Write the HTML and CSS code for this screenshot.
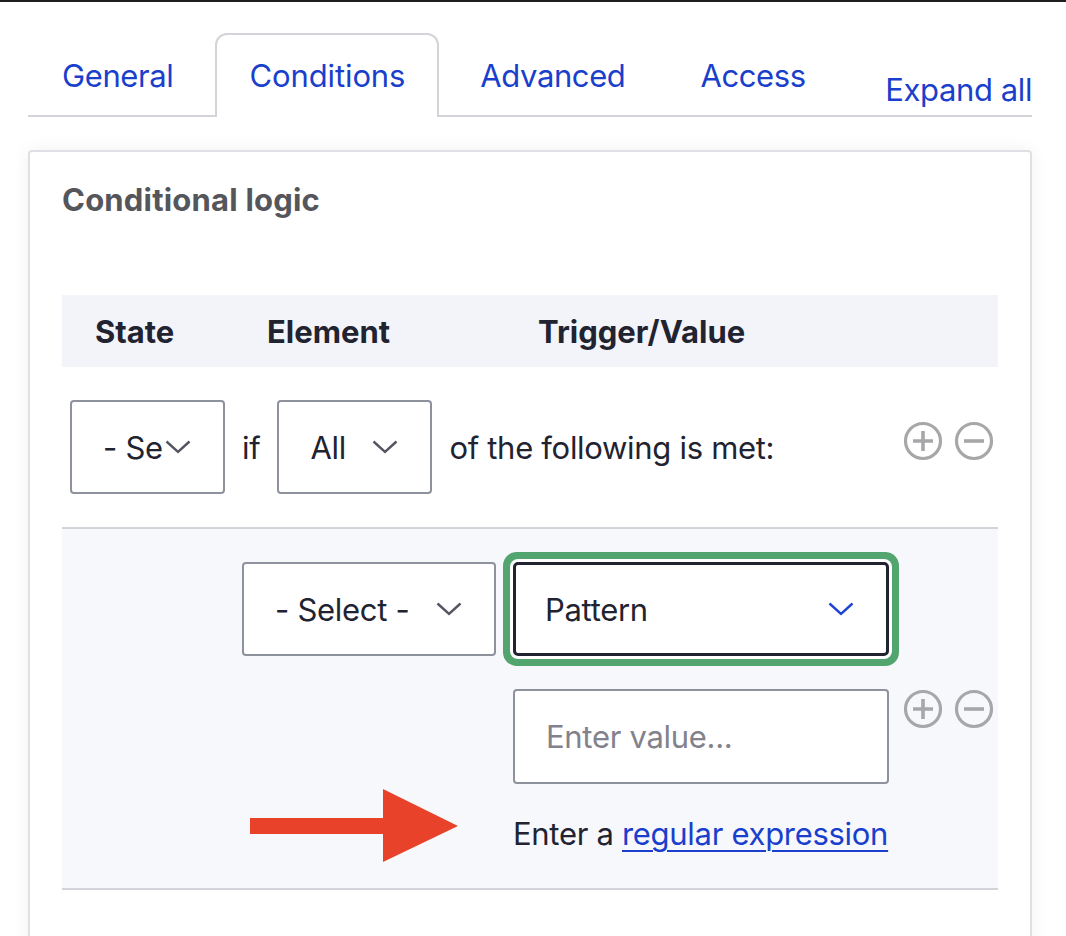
FILE: index.html
```html
<!DOCTYPE html>
<html lang="en">
<head>
<meta charset="utf-8">
<title>Conditions</title>
<link rel="stylesheet" href="styles.css">
</head>
<body>
<div class="page">
  <nav class="tabs">
    <a class="tab" href="#">General</a>
    <a class="tab active" href="#">Conditions</a>
    <a class="tab" href="#">Advanced</a>
    <a class="tab" href="#">Access</a>
    <a class="expand" href="#">Expand all</a>
  </nav>

  <section class="panel">
    <h2 class="panel-title">Conditional logic</h2>

    <div class="states">
      <div class="states-head">
        <div class="th">State</div>
        <div class="th">Element</div>
        <div class="th th-wide">Trigger/Value</div>
      </div>

      <div class="state-row">
        <div class="state-cell">
          <div class="select select-narrow">
            <span class="select-text">- Se</span>
            <svg class="chev" viewBox="0 0 26 14" width="26" height="14"><path d="M1.5 1.5 L13 12 L24.5 1.5" /></svg>
          </div>
          <span class="word">if</span>
          <div class="select select-narrow">
            <span class="select-text">All</span>
            <svg class="chev" viewBox="0 0 26 14" width="26" height="14"><path d="M1.5 1.5 L13 12 L24.5 1.5" /></svg>
          </div>
          <span class="word">of the following is met:</span>
        </div>
        <div class="ops ops-state">
          <svg class="op" viewBox="0 0 40 40" width="40" height="40"><circle cx="20" cy="20" r="17.5"/><path d="M20 10 V30 M10 20 H30"/></svg>
          <svg class="op" viewBox="0 0 40 40" width="40" height="40"><circle cx="20" cy="20" r="17.5"/><path d="M10 20 H30"/></svg>
        </div>
      </div>

      <div class="cond-row">
        <div class="cell-empty"></div>
        <div class="cell">
          <div class="select select-element">
            <span class="select-text">- Select -</span>
            <svg class="chev" viewBox="0 0 26 14" width="26" height="14"><path d="M1.5 1.5 L13 12 L24.5 1.5" /></svg>
          </div>
        </div>
        <div class="cell trigger">
          <div class="select select-focus">
            <span class="select-text">Pattern</span>
            <svg class="chev chev-blue" viewBox="0 0 26 14" width="26" height="14"><path d="M1.5 1.5 L13 12 L24.5 1.5" /></svg>
          </div>
          <input class="value" type="text" placeholder="Enter value...">
          <div class="desc">Enter a <a href="#">regular expression</a></div>
        </div>
        <div class="ops">
          <svg class="op" viewBox="0 0 40 40" width="40" height="40"><circle cx="20" cy="20" r="17.5"/><path d="M20 10 V30 M10 20 H30"/></svg>
          <svg class="op" viewBox="0 0 40 40" width="40" height="40"><circle cx="20" cy="20" r="17.5"/><path d="M10 20 H30"/></svg>
        </div>
        <svg class="arrow" viewBox="0 0 208 74" width="208" height="74"><path d="M0 29 H133 V0 L208 37 L133 73 V45 H0 Z"/></svg>
      </div>
    </div>
  </section>
</div>
</body>
</html>
```

FILE: styles.css
```css
html, body {
  margin: 0;
  padding: 0;
  background: #ffffff;
}

body {
  border-top: 2px solid #1f1f22;
  font-family: Inter, "Noto Sans", "Liberation Sans", sans-serif;
  font-size: 31px;
  line-height: 47px;
  letter-spacing: -0.3px;
  color: #222330;
  overflow: hidden;
  height: 934px;
}

.page {
  width: 1004px;
  margin-left: 28px;
  padding-top: 31px;
}

/* Tabs */
.tabs {
  display: flex;
  align-items: flex-end;
  border-bottom: 2px solid #d3d4d9;
}

.tab {
  display: block;
  padding: 17px 32px 16px;
  margin-right: 7px;
  border: 2px solid transparent;
  border-bottom: 0;
  border-radius: 12px 12px 0 0;
  color: #1a3fcc;
  text-decoration: none;
  white-space: nowrap;
  letter-spacing: -0.4px;
}

.tab:first-child {
  margin-right: 8px;
}

.tab.active {
  border-color: #d3d4d9;
  background: #ffffff;
  margin-bottom: -2px;
  padding-bottom: 18px;
  letter-spacing: -0.1px;
}

.expand {
  margin-left: auto;
  color: #1a3fcc;
  text-decoration: none;
  white-space: nowrap;
  margin-bottom: 2px;
  letter-spacing: -0.4px;
}

/* Panel */
.panel {
  margin-top: 33px;
  border: 2px solid #dfe0e5;
  border-radius: 4px;
  padding: 24px 32px 80px;
  box-shadow: 0 0 18px rgba(0, 0, 0, 0.06);
}

.panel-title {
  margin: 0 0 72px;
  font-size: 31px;
  line-height: 47px;
  font-weight: 700;
  letter-spacing: 0.2px;
  color: #55565b;
}

/* States table */
.states {
  position: relative;
}

.states-head,
.state-row,
.cond-row {
  display: grid;
  grid-template-columns: 172px 271px 390px 1fr;
}

.states-head {
  background: #f3f4f9;
  height: 72px;
  align-items: center;
}

.th {
  padding-left: 33px;
  font-weight: 700;
  letter-spacing: 0;
  white-space: nowrap;
}

.th-wide {
  grid-column: span 2;
}

.state-row {
  border-bottom: 2px solid #d3d4d9;
}

.state-cell {
  grid-column: span 3;
  display: flex;
  align-items: center;
  gap: 17px;
  padding: 33px 8px;
}

.word {
  white-space: nowrap;
}

/* Select look-alikes */
.select {
  box-sizing: border-box;
  height: 94px;
  display: flex;
  align-items: center;
  padding: 0 32px 0 31px;
  border: 2px solid #8e929c;
  border-radius: 4px;
  background: #ffffff;
}

.select-text {
  flex: 1;
  white-space: nowrap;
}

.select-narrow {
  width: 155px;
}

.select-element {
  width: 254px;
}

.select-focus {
  width: 376px;
  border: 3px solid #222330;
  padding-left: 29px;
  box-shadow: 0 0 0 3px #ffffff, 0 0 0 10px #53a56f;
  border-radius: 5px;
}

.chev {
  flex: none;
  fill: none;
  stroke: #545560;
  stroke-width: 2.4;
}

.chev-blue {
  stroke: #1f44d2;
}

/* Condition row */
.cond-row {
  position: relative;
  background: #f7f8fc;
  border-bottom: 2px solid #d3d4d9;
}

.cell {
  padding: 33px 8px;
}

.trigger {
  display: flex;
  flex-direction: column;
  align-items: flex-start;
  padding-bottom: 36px;
}

.value {
  box-sizing: border-box;
  width: 376px;
  height: 95px;
  margin: 33px 0 0;
  padding: 0 31px;
  border: 2px solid #8e929c;
  border-radius: 4px;
  background: #ffffff;
  font-family: Inter, "Noto Sans", "Liberation Sans", sans-serif;
  font-size: 31px;
  letter-spacing: -0.3px;
  color: #222330;
  outline: none;
}

.value::placeholder {
  color: #82828c;
}

.desc {
  margin-top: 31px;
  line-height: 37px;
  white-space: nowrap;
}

.desc a {
  color: #1a3fcc;
  text-decoration: underline;
  text-decoration-thickness: 2px;
  text-underline-offset: 5px;
}

/* Operations */
.ops {
  display: flex;
  gap: 11px;
  padding-left: 8px;
  align-self: center;
}

.ops-state {
  margin-bottom: 12px;
}

.op {
  fill: none;
  stroke: #a7a7a9;
  stroke-width: 3.2;
}

.op path {
  stroke-width: 3.6;
}

/* Annotation arrow */
.arrow {
  position: absolute;
  left: 188px;
  top: 260px;
  fill: #e8432a;
}
```
